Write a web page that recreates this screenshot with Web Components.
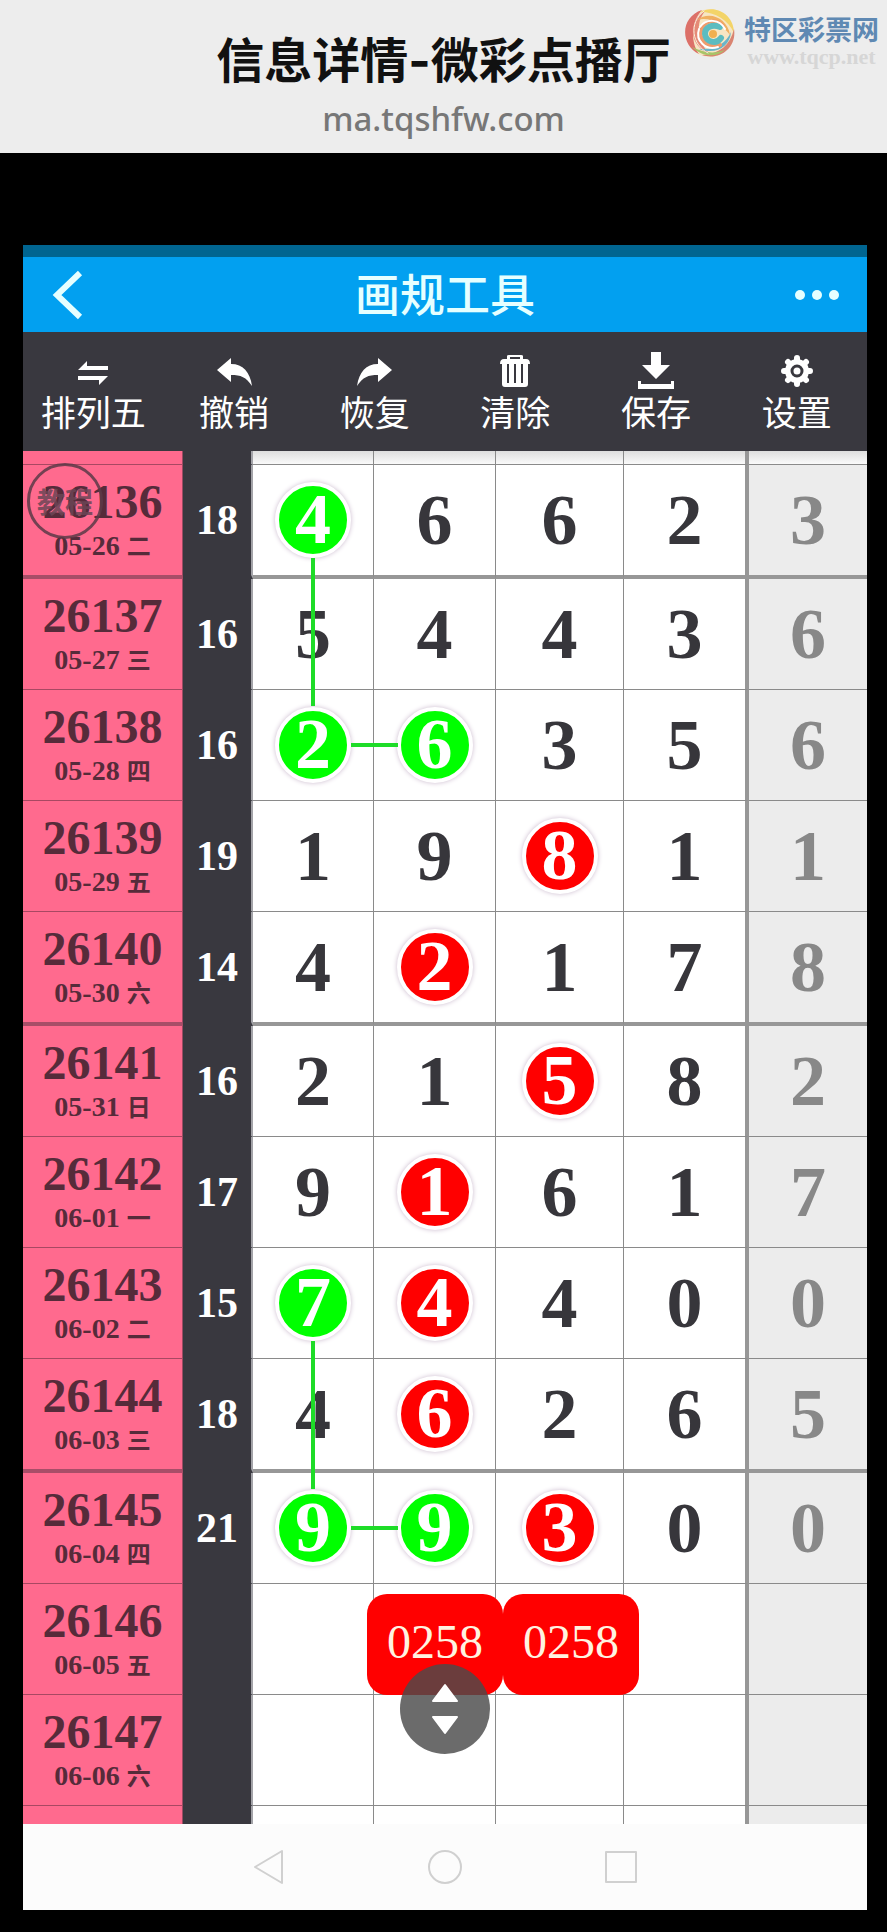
<!DOCTYPE html>
<html lang="zh-CN">
<head>
<meta charset="utf-8">
<title>画规工具</title>
<style>
  html {
    background: #000;
  }

  body {
    margin: 0;
    font-family: "Noto Sans CJK SC", sans-serif;
  }

  .screen {
    margin: 92px 20px 22px 23px;
  }
</style>
</head>
<body>
<page-header url="ma.tqshfw.com">信息详情-微彩点播厅</page-header>
<main class="screen">
  <app-bar>画规工具</app-bar>
  <tool-bar>
    <tool-button icon="swap">排列五</tool-button>
    <tool-button icon="undo">撤销</tool-button>
    <tool-button icon="redo">恢复</tool-button>
    <tool-button icon="trash">清除</tool-button>
    <tool-button icon="save">保存</tool-button>
    <tool-button icon="gear">设置</tool-button>
  </tool-bar>
  <trend-table></trend-table>
  <nav-bar></nav-bar>
</main>

<script>
class SiteLogo extends HTMLElement {
  constructor() {
    super();
    const shadow = this.attachShadow({ mode: 'open' });
    shadow.innerHTML = `
    <style>
      :host {
        display: flex;
        align-items: flex-start;
        gap: 8px;
      }

      svg {
        width: 52px;
        height: 52px;
      }

      .text {
        padding-top: 6px;
      }

      .name {
        font: bold 27px/32px "Noto Sans CJK SC", sans-serif;
        color: #5f89b3;
      }

      .site {
        font: bold 22px/24px "Liberation Serif", serif;
        color: #d6d6d6;
      }
    </style>
    <svg viewBox="0 0 52 52" fill="none" stroke-linecap="round">
      <circle cx="26" cy="26" r="24" fill="#f6e6c4"/>
      <path d="M18 3C-4 10-4 38 15 47C7 36 6 16 18 3Z" fill="#dc7068"/>
      <path d="M22 3C2 14 6 40 26 47C14 36 10 16 22 3Z" fill="#e58a76"/>
      <path d="M16 5C32-3 50 8 50 26C44 13 32 5 16 5Z" fill="#f3d468"/>
      <path d="M13 13C26 3 44 12 46 28C38 17 26 9 13 13Z" fill="#f0b060"/>
      <path d="M50 22C53 40 36 54 18 48C36 47 46 38 50 22Z" fill="#d98472"/>
      <path d="M47 25C46 40 32 48 15 42C32 43 42 36 47 25Z" fill="#6ab4c8"/>
      <path d="M8 40C18 50 32 51 41 43C30 47 20 46 8 40Z" fill="#a8c468"/>
      <path d="M36 38C22 42 13 31 18 21C22 13 33 12 39 19" stroke="#ef9c6c" stroke-width="4"/>
      <path d="M37 31C32 38 22 35 21 27C21 20 28 17 36 20" stroke="#5cbcc0" stroke-width="6"/>
      <path d="M41 22C36 12 22 11 16 20" stroke="#fff" stroke-width="2"/>
      <path d="M15 22C11 34 22 44 34 40" stroke="#fff" stroke-width="2"/>
      <path d="M20 4C4 16 8 38 24 46" stroke="#fbeee0" stroke-width="1"/>
      <circle cx="29" cy="27" r="4" fill="#f0b050"/>
    </svg>
    <div class="text">
      <div class="name">特区彩票网</div>
      <div class="site">www.tqcp.net</div>
    </div>
    `;
  }
}

class PageHeader extends HTMLElement {
  constructor() {
    super();
    const shadow = this.attachShadow({ mode: 'open' });
    shadow.innerHTML = `
    <style>
      :host {
        display: block;
        position: relative;
        box-sizing: border-box;
        padding: 25px 0 12px;
        background: #ededed;
        text-align: center;
      }

      h1 {
        margin: 0;
        font: bold 48px/72px Inter, "Noto Sans CJK SC", sans-serif;
        color: #111;
      }

      p {
        margin: 0;
        font: 500 33px/44px "Noto Sans", sans-serif;
        color: #777;
      }

      site-logo {
        position: absolute;
        top: 7px;
        right: 8px;
      }
    </style>
    <h1><slot></slot></h1>
    <p></p>
    <site-logo></site-logo>
    `;
    shadow.querySelector('p').textContent = this.getAttribute('url');
  }
}

class AppBar extends HTMLElement {
  constructor() {
    super();
    const shadow = this.attachShadow({ mode: 'open' });
    shadow.innerHTML = `
    <style>
      :host {
        display: grid;
        grid-template-columns: 100px 1fr 100px;
        align-items: center;
        height: 75px;
        border-top: 12px solid #006591;
        background: #02a0f0;
      }

      h2 {
        margin: 0;
        font-size: 45px;
        line-height: 60px;
        padding-bottom: 4px;
        font-weight: 500;
        text-align: center;
        color: #e6ffff;
      }

      button {
        display: flex;
        justify-content: center;
        padding: 0;
        border: none;
        background: none;
        cursor: pointer;
      }

      .back {
        justify-content: flex-start;
        padding-left: 26px;
      }
    </style>
    <button class="back" aria-label="返回">
      <svg width="34" height="50" viewBox="0 0 34 50" fill="none" stroke="#e6ffff" stroke-width="6"><path d="M31 3L8 25L31 47"/></svg>
    </button>
    <h2><slot></slot></h2>
    <button aria-label="更多">
      <svg width="46" height="12" viewBox="0 0 46 12" fill="#e6ffff"><circle cx="6" cy="6" r="5"/><circle cx="23" cy="6" r="5"/><circle cx="40" cy="6" r="5"/></svg>
    </button>
    `;
  }
}

class ToolBar extends HTMLElement {
  constructor() {
    super();
    const shadow = this.attachShadow({ mode: 'open' });
    shadow.innerHTML = `
    <style>
      :host {
        display: grid;
        grid-template-columns: repeat(6, 1fr);
        padding: 21px 0 18px;
        background: #39383f;
      }
    </style>
    <slot></slot>
    `;
  }
}

const TOOL_ICONS = {
  swap: '<path d="M3 17L12 8V13H33V17H3ZM33 23H3V27H24V32L33 23Z"/>',
  undo: '<path d="M1 17L15 5V11C27 11 34 19 36 33C30 24 25 22 15 22V29Z"/>',
  redo: '<path d="M35 17L21 5V11C9 11 2 19 0 33C6 24 11 22 21 22V29Z"/>',
  trash: '<path fill-rule="evenodd" d="M10 6V3Q10 2 12 2H24Q26 2 26 3V6H29Q33 6 33 11H31V31Q31 34 28 34H8Q5 34 5 31V11H3Q3 6 7 6ZM13 6H23V4H13ZM10 11V30H12V11ZM17 11V30H19V11ZM24 11V30H26V11Z"/>',
  save: '<path d="M13 -1H23V12H32L18 26L4 12H13ZM0 28H3V31H33V28H36V36H0Z"/>',
  gear: '<g stroke="#fff" stroke-width="6" stroke-linecap="round"><path d="M18 5V31M5 18H31M9 9L27 27M27 9L9 27"/></g><circle cx="18" cy="18" r="12"/><circle cx="18" cy="18" r="5" stroke="#39383f" stroke-width="3"/>'
};

class ToolButton extends HTMLElement {
  constructor() {
    super();
    const shadow = this.attachShadow({ mode: 'open' });
    shadow.innerHTML = `
    <style>
      :host {
        display: block;
      }

      button {
        display: flex;
        flex-direction: column;
        align-items: center;
        width: 100%;
        padding: 0;
        border: none;
        background: none;
        font: 35px/44px "Noto Sans CJK SC", sans-serif;
        color: #fff;
        cursor: pointer;
      }

      svg {
        width: 36px;
        height: 36px;
        overflow: visible;
        fill: #fff;
      }
    </style>
    <button>
      <svg viewBox="0 0 36 36">${TOOL_ICONS[this.getAttribute('icon')]}</svg>
      <slot></slot>
    </button>
    `;
  }
}

/* A digit in a coloured disc; link="down" or "right" draws a line to the next one */
class DrawMark extends HTMLElement {
  constructor() {
    super();
    const shadow = this.attachShadow({ mode: 'open' });
    shadow.innerHTML = `
    <style>
      :host {
        display: block;
        position: relative;
        width: 68px;
        height: 68px;
        margin: 0 auto;
        border: 4px solid #fff;
        border-radius: 50%;
        box-shadow: 0 0 5px #c9b8cc;
        line-height: 66px;
        background: #f00;
        color: #fff;
      }

      :host([color="green"]) {
        background: #0f0;
      }

      :host([link])::after {
        content: "";
        position: absolute;
        z-index: 1;
        background: #1edc28;
      }

      :host([link~="down"])::after {
        left: 32px;
        top: 72px;
        width: 4px;
        height: 148px;
      }

      :host([link~="right"])::after {
        left: 72px;
        top: 32px;
        width: 47px;
        height: 4px;
      }
    </style>
    <slot></slot>
    `;
  }
}

class ScrollKnob extends HTMLElement {
  constructor() {
    super();
    const shadow = this.attachShadow({ mode: 'open' });
    shadow.innerHTML = `
    <style>
      :host {
        display: block;
      }

      button {
        display: grid;
        place-items: center;
        width: 90px;
        height: 90px;
        padding: 0;
        border: none;
        border-radius: 50%;
        background: rgba(75, 75, 75, 0.82);
        cursor: pointer;
      }
    </style>
    <button aria-label="滚动">
      <svg width="26" height="52" viewBox="0 0 26 52" fill="#fff" stroke="#fff" stroke-width="2" stroke-linejoin="round"><path d="M13 2L25 18H1ZM13 50L25 34H1Z"/></svg>
    </button>
    `;
  }
}

const ROWS = [
  ['26136', '05-26', '二', '18', '4gd', '6', '6', '2', '3'],
  ['26137', '05-27', '三', '16', '5', '4', '4', '3', '6'],
  ['26138', '05-28', '四', '16', '2gr', '6g', '3', '5', '6'],
  ['26139', '05-29', '五', '19', '1', '9', '8x', '1', '1'],
  ['26140', '05-30', '六', '14', '4', '2x', '1', '7', '8'],
  ['26141', '05-31', '日', '16', '2', '1', '5x', '8', '2'],
  ['26142', '06-01', '一', '17', '9', '1x', '6', '1', '7'],
  ['26143', '06-02', '二', '15', '7gd', '4x', '4', '0', '0'],
  ['26144', '06-03', '三', '18', '4', '6x', '2', '6', '5'],
  ['26145', '06-04', '四', '21', '9gr', '9g', '3x', '0', '0'],
  ['26146', '06-05', '五', '', '', ['0258', '0258'], '', '', ''],
  ['26147', '06-06', '六', '', '', '', '', '', '']
];

/* '4gd' = digit 4, green disc, line down; 'x' = red disc */
function cell(value) {
  if (Array.isArray(value)) {
    return `<td><div class="picks">${value.map((v) => `<span>${v}</span>`).join('')}</div></td>`;
  }
  if (value.length < 2) {
    return `<td>${value}</td>`;
  }
  const color = value[1] === 'g' ? 'green' : 'red';
  const link = { d: ' link="down"', r: ' link="right"' }[value[2]] || '';
  return `<td><draw-mark color="${color}"${link}>${value[0]}</draw-mark></td>`;
}

function row([issue, date, day, sum, ...digits], index) {
  return `
    <tr${index % 4 === 0 ? ' class="group"' : ''}>
      <th scope="row">${issue}<small>${date} <i>${day}</i></small></th>
      <td class="sum">${sum}</td>
      ${digits.map(cell).join('')}
    </tr>`;
}

const EMPTY_CELLS = '<th></th><td class="sum"></td><td></td><td></td><td></td><td></td><td></td>';

class TrendTable extends HTMLElement {
  constructor() {
    super();
    const shadow = this.attachShadow({ mode: 'open' });
    shadow.innerHTML = `
    <style>
      :host {
        display: block;
        position: relative;
      }

      table {
        width: 100%;
        table-layout: fixed;
        border-spacing: 0;
        background: #fff;
        font-family: "Liberation Serif", "Noto Sans CJK SC", serif;
        font-weight: bold;
        text-align: center;
        color: #37363b;
      }

      th, td {
        position: relative;
        box-sizing: content-box;
        height: 110px;
        padding: 0;
        border-bottom: 1px solid #8a8a8a;
      }

      td {
        border-right: 1px solid #8a8a8a;
        font-size: 72px;
        line-height: 76px;
      }

      th {
        background: #ff6a8e;
        border-bottom-color: #a84862;
        border-right: 1px solid #9c4a62;
        font-size: 48px;
        line-height: 48px;
        color: #562b3a;
      }

      tr:not(.edge) > th {
        height: 106px;
        padding-top: 4px;
      }

      small {
        display: block;
        font-size: 28px;
        line-height: 40px;
      }

      i {
        font-size: 24px;
        font-style: normal;
      }

      .sum {
        background: #39383f;
        border-bottom-color: #39383f;
        border-right: 2px solid #a3a3a8;
        font-size: 42px;
        color: #fff;
      }

      td:nth-child(6) {
        border-right: 4px solid #979797;
      }

      td:last-child {
        border-right: none;
        background: #ececec;
        color: #888;
      }

      .group > * {
        border-bottom-width: 4px;
        border-bottom-color: #979797;
      }

      .group > th {
        border-bottom-color: #a84e68;
      }

      .group > .sum {
        border-bottom-color: #39383f;
      }

      .edge > * {
        height: 13px;
        line-height: 13px;
      }

      .edge.top > td:not(.sum) {
        background: linear-gradient(#dedede, #fafafa);
      }

      .edge.bottom > * {
        height: 18px;
        border-bottom: none;
      }

      .picks {
        position: absolute;
        z-index: 1;
        top: 10px;
        left: -7px;
        display: flex;
      }

      .picks span {
        width: 136px;
        height: 101px;
        border-radius: 20px;
        background: #f00;
        font-size: 48px;
        font-weight: normal;
        line-height: 96px;
        color: #fff3e0;
      }

      .tutorial {
        position: absolute;
        z-index: 2;
        top: 12px;
        left: 4px;
        width: 76px;
        height: 76px;
        padding: 0;
        border: 3px solid #5c3a48;
        border-radius: 50%;
        background: none;
        font: bold 28px/70px "Noto Sans CJK SC", sans-serif;
        color: #6b4656;
        opacity: 0.85;
        cursor: pointer;
      }

      scroll-knob {
        position: absolute;
        z-index: 2;
        bottom: 70px;
        left: calc(50% - 45px);
      }
    </style>
    <table>
      <colgroup>
        <col style="width: 160px">
        <col style="width: 70px">
        <col style="width: 121px">
        <col style="width: 122px">
        <col style="width: 128px">
        <col style="width: 125px">
        <col style="width: 118px">
      </colgroup>
      <tbody>
        <tr class="edge top">${EMPTY_CELLS}</tr>
        ${ROWS.map(row).join('')}
        <tr class="edge bottom">${EMPTY_CELLS}</tr>
      </tbody>
    </table>
    <button class="tutorial">教程</button>
    <scroll-knob></scroll-knob>
    `;
  }
}

class NavBar extends HTMLElement {
  constructor() {
    super();
    const shadow = this.attachShadow({ mode: 'open' });
    shadow.innerHTML = `
    <style>
      :host {
        display: flex;
        justify-content: center;
        gap: 140px;
        padding: 25px 0;
        background: #fcfcfc;
      }

      button {
        display: flex;
        padding: 0;
        border: none;
        background: none;
        cursor: pointer;
      }

      svg {
        width: 36px;
        height: 36px;
        fill: none;
        stroke: #d0d0d0;
        stroke-width: 2;
        stroke-linejoin: round;
      }
    </style>
    <button aria-label="后退"><svg viewBox="0 0 36 36"><path d="M31 2V34L4 18Z"/></svg></button>
    <button aria-label="主页"><svg viewBox="0 0 36 36"><circle cx="18" cy="18" r="16"/></svg></button>
    <button aria-label="最近任务"><svg viewBox="0 0 36 36"><path d="M3 3H33V33H3Z"/></svg></button>
    `;
  }
}

customElements.define('site-logo', SiteLogo);
customElements.define('page-header', PageHeader);
customElements.define('app-bar', AppBar);
customElements.define('tool-bar', ToolBar);
customElements.define('tool-button', ToolButton);
customElements.define('draw-mark', DrawMark);
customElements.define('scroll-knob', ScrollKnob);
customElements.define('trend-table', TrendTable);
customElements.define('nav-bar', NavBar);
</script>
</body>
</html>
